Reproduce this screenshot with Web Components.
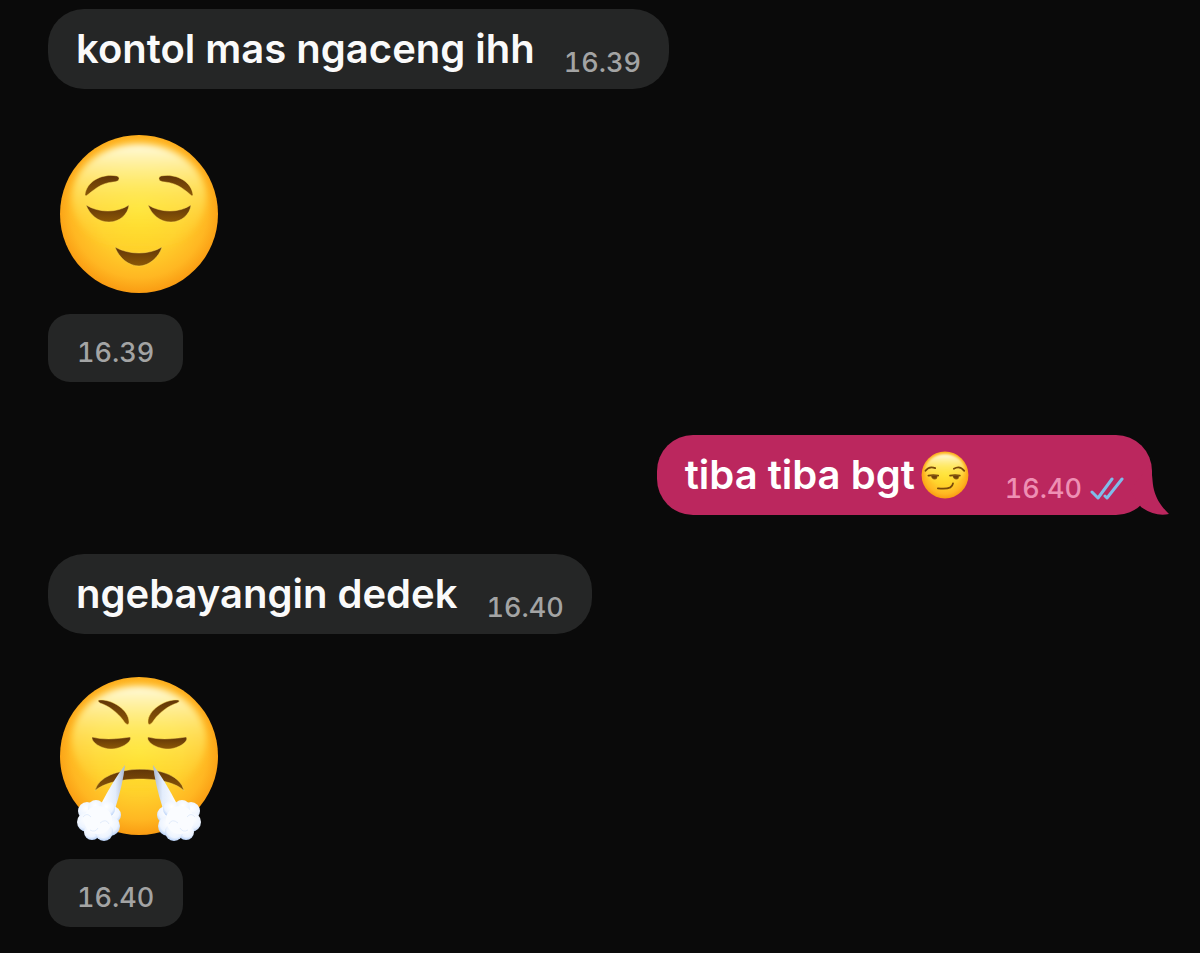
<!DOCTYPE html>
<html lang="id">
<head>
<meta charset="utf-8">
<meta name="viewport" content="width=device-width, initial-scale=1">
<title>Chat</title>
<style>
  body {
    margin: 0;
    background: #0a0a0a;
    font-family: Inter, "Liberation Sans", sans-serif;
  }
</style>
</head>
<body>

<chat-thread>
  <chat-bubble time="16.39">kontol mas ngaceng ihh</chat-bubble>
  <chat-sticker time="16.39"><face-emoji kind="relieved"></face-emoji></chat-sticker>
  <chat-bubble time="16.40" out>tiba tiba bgt<face-emoji kind="smirk"></face-emoji></chat-bubble>
  <chat-bubble time="16.40">ngebayangin dedek</chat-bubble>
  <chat-sticker time="16.40"><face-emoji kind="huffing"></face-emoji></chat-sticker>
</chat-thread>

<script>
// the list of messages, one under the other
class ChatThread extends HTMLElement {
  constructor() {
    super();
    this.attachShadow({ mode: "open" }).innerHTML = `
      <style>
        :host {
          display: flex;
          flex-direction: column;
          align-items: flex-start;
          padding: 9px 48px 24px;
        }
        ::slotted(chat-sticker) { margin-top: 36px; }
        ::slotted(chat-bubble:not(:first-child)) { margin-top: 39px; }
        ::slotted(chat-bubble[out]) { align-self: flex-end; margin-top: 53px !important; }
      </style>
      <slot></slot>`;
  }
}

class ChatBubble extends HTMLElement {
  constructor() {
    super();
    const out = this.hasAttribute("out");
    const ticks = `
      <svg class="ticks" viewBox="0 0 34 24" role="img" aria-label="Read">
        <path d="M2 15 L8 21 L22 2 M15 19 L17 21 L32 2"/>
      </svg>`;
    const tail = `
      <svg class="tail" viewBox="0 0 40 50" aria-hidden="true">
        <path d="M20 0 C23 10 22 17 24 25 C27 36 32 42 39 49 Q25 52 11 42 L0 25 Z"/>
      </svg>`;

    this.attachShadow({ mode: "open" }).innerHTML = `
      <style>
        :host {
          display: flex;
          align-items: flex-end;
          gap: 29px;
          box-sizing: border-box;
          min-height: 80px;
          padding: 16px 28px;
          border-radius: 36px;
          background: #252626;
          color: #fafafa;
          position: relative;
        }
        :host([out]) { background: #bb275e; color: #fff; gap: 36px; }
        .text {
          display: flex;
          align-items: center;
          gap: 6px;
          font-size: 40px;
          font-weight: 600;
          line-height: 48px;
        }
        .meta {
          display: flex;
          align-items: center;
          gap: 8px;
          height: 20px;
          color: #a3a4a4;
          font-size: 27px;
          font-weight: 500;
          font-variant-numeric: tabular-nums;
          line-height: 20px;
        }
        :host([out]) .meta { color: #ee90b4; }
        .ticks { width: 34px; height: 24px; fill: none; stroke: #7fbce9; stroke-width: 3; stroke-linecap: round; stroke-linejoin: round; }
        .tail { position: absolute; right: -18px; bottom: 0; width: 40px; height: 50px; fill: #bb275e; }
      </style>
      <span class="text"><slot></slot></span>
      <span class="meta"><time>${this.getAttribute("time")}</time>${out ? ticks : ""}</span>
      ${out ? tail : ""}`;
  }
}

// big emoji without a bubble, the time sits in its own pill
class ChatSticker extends HTMLElement {
  constructor() {
    super();
    this.attachShadow({ mode: "open" }).innerHTML = `
      <style>
        :host {
          display: flex;
          flex-direction: column;
          align-items: flex-start;
          gap: 9px;
        }
        ::slotted(face-emoji) { --size: 180px; }
        time {
          padding: 29px 29px 19px;
          border-radius: 22px;
          background: #252626;
          color: #a3a4a4;
          font-size: 27px;
          font-weight: 500;
          font-variant-numeric: tabular-nums;
          line-height: 20px;
        }
      </style>
      <slot></slot>
      <time>${this.getAttribute("time")}</time>`;
  }
}

const puff = `
  <g>
    <path d="M75 95 Q64 109 51 134 L65 139 Q73 114 75 95Z" fill="url(#steam)"/>
    <g fill="url(#cloud)">
      <circle cx="62" cy="145" r="9"/><circle cx="60" cy="156" r="10"/>
      <circle cx="37" cy="141" r="9"/><circle cx="37" cy="152" r="10"/>
      <circle cx="42" cy="162" r="8"/><circle cx="54" cy="162" r="9"/>
      <circle cx="46" cy="138" r="8"/><circle cx="57" cy="139" r="8"/>
    </g>
    <circle cx="48" cy="150" r="14" fill="#fafcff"/>
    <path d="M33 147q4-5 8 0M50 153q6-5 9 1M40 160q5 3 8-2" fill="none" stroke="#e3edfc" stroke-width="1"/>
  </g>`;

const faces = {
  relieved: {
    box: "-2 0 180 180",
    label: "relieved face",
    art: `
      <g class="shade">
        <path d="M35 70 C36 58 50 48 67 51 C71 53 69 57 63 57 C50 58 43 66 36 71Z"/>
        <path d="M143 70 C142 58 128 48 111 51 C107 53 109 57 115 57 C128 58 136 66 142 71Z"/>
        <path d="M36 80 C49 88 67 88 79 80 C78 89 70 97 59 97 C48 97 40 90 36 80Z"/>
        <path d="M98 80 C111 88 129 88 141 80 C140 89 132 97 121 97 C110 97 102 90 98 80Z"/>
        <path d="M65 122 C79 130 99 130 112 122 C109 132 99 141 89 141 C79 141 69 133 65 122Z"/>
      </g>`
  },
  smirk: {
    box: "8 8 162 162",
    label: "smirking face",
    art: `
      <g class="line">
        <path d="M23 75 Q36 57 56 66M119 68 Q139 56 154 75"/>
        <path d="M33 91 Q49 88 66 91M106 91 Q123 88 139 91"/>
        <path d="M65 134 Q113 140 116 117"/>
      </g>
      <g class="shade">
        <path d="M42 92 H63 Q64 104 54 104 Q44 103 42 92ZM115 92 H136 Q137 104 127 104 Q117 103 115 92Z"/>
      </g>`
  },
  huffing: {
    box: "-2 3 180 180",
    label: "face with steam from nose",
    art: `
      <g transform="translate(0 3)">
        <g class="shade">
          <path d="M49 30 C62 29 79 40 79 52 C79 56 76 55 73 50 C67 42 59 36 50 33 Q47 31 49 30Z"/>
          <path d="M128 30 C115 29 98 40 98 52 C98 56 101 55 104 50 C110 42 118 36 127 33 Q131 31 128 30Z"/>
          <path d="M42 67 C53 70 68 69 80 67 C83 71 72 79 61 79 C51 79 41 72 42 67Z"/>
          <path d="M98 67 C109 70 124 69 136 67 C140 71 128 79 118 79 C107 79 96 72 98 67Z"/>
          <path d="M45 121 C50 93 129 91 134 121 C121 105 60 105 45 121Z"/>
        </g>
        ${puff}
        <g transform="translate(178 0) scale(-1 1)">${puff}</g>
      </g>`
  }
};

class FaceEmoji extends HTMLElement {
  constructor() {
    super();
    const face = faces[this.getAttribute("kind")];
    this.attachShadow({ mode: "open" }).innerHTML = `
      <style>
        :host { display: block; width: var(--size, 48px); height: var(--size, 48px); }
        svg { display: block; width: 100%; height: 100%; }
        .shade { fill: url(#brown); stroke: #ffe05a; stroke-opacity: .45; stroke-width: 1; }
        .line { fill: none; stroke: #79490a; stroke-width: 6; stroke-linecap: round; }
      </style>
      <svg viewBox="${face.box}" role="img" aria-label="${face.label}">
        <defs>
          <radialGradient id="skin" gradientUnits="userSpaceOnUse" cx="89" cy="84" r="86">
            <stop offset="0" stop-color="#ffe128"/>
            <stop offset=".5" stop-color="#ffd02c"/>
            <stop offset=".8" stop-color="#ffb722"/>
            <stop offset="1" stop-color="#f99810"/>
          </radialGradient>
          <linearGradient id="glow" x1="0" y1="0" x2="0" y2="1">
            <stop offset="0" stop-color="#fffbe0"/>
            <stop offset=".4" stop-color="#fff27c" stop-opacity=".65"/>
            <stop offset="1" stop-color="#ffe22c" stop-opacity="0"/>
          </linearGradient>
          <linearGradient id="brown" x1="0" y1="0" x2="0" y2="1">
            <stop offset="0" stop-color="#613508"/>
            <stop offset="1" stop-color="#8c5806"/>
          </linearGradient>
          <linearGradient id="steam" x1="0" y1="0" x2="1" y2="0">
            <stop offset="0" stop-color="#ffffff"/>
            <stop offset=".6" stop-color="#e3edfc"/>
            <stop offset="1" stop-color="#a9b7d0"/>
          </linearGradient>
          <radialGradient id="cloud" cx=".45" cy=".35" r=".65">
            <stop offset="0" stop-color="#ffffff"/>
            <stop offset=".7" stop-color="#edf4ff"/>
            <stop offset="1" stop-color="#b9d2f8"/>
          </radialGradient>
          <filter id="soft"><feGaussianBlur stdDeviation="3"/></filter>
        </defs>
        <circle cx="89" cy="89" r="79" fill="url(#skin)"/>
        <ellipse cx="89" cy="73" rx="67" ry="54" fill="url(#glow)" filter="url(#soft)"/>
        ${face.art}
      </svg>`;
  }
}

customElements.define("face-emoji", FaceEmoji);
customElements.define("chat-sticker", ChatSticker);
customElements.define("chat-bubble", ChatBubble);
customElements.define("chat-thread", ChatThread);
</script>
</body>
</html>
